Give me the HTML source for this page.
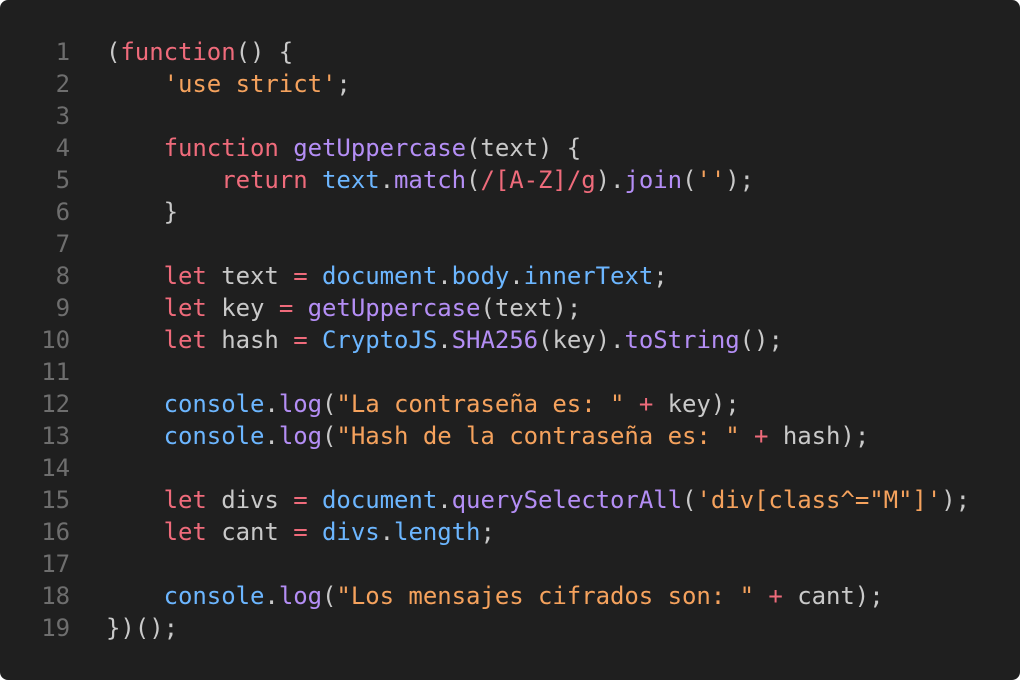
<!DOCTYPE html>
<html><head><style>
html,body{margin:0;padding:0;background:#fff;}
.w{width:1020px;height:680px;background:#1f1f1f;border-radius:8px;position:relative;overflow:hidden;}
pre{margin:0;position:absolute;top:36px;font-family:"DejaVu Sans Mono","Liberation Mono",monospace;font-size:24px;line-height:32px;color:#c9c9c9;letter-spacing:-0.05px;}
.n{left:0;width:70px;text-align:right;color:#6e6e6e;}
.c{left:106px;}
.k{color:#ef6b7b}.s{color:#f5a25d}.f{color:#b48ef5}.p{color:#6cb6ff}
</style></head><body><div class="w">
<pre class="n">1
2
3
4
5
6
7
8
9
10
11
12
13
14
15
16
17
18
19</pre>
<pre class="c">(<span class="k">function</span>() {
    <span class="s">'use strict'</span>;

    <span class="k">function</span> <span class="f">getUppercase</span>(text) {
        <span class="k">return</span> <span class="p">text</span>.<span class="f">match</span>(<span class="k">/[A-Z]/g</span>).<span class="f">join</span>(<span class="s">''</span>);
    }

    <span class="k">let</span> text <span class="k">=</span> <span class="p">document</span>.<span class="p">body</span>.<span class="p">innerText</span>;
    <span class="k">let</span> key <span class="k">=</span> <span class="f">getUppercase</span>(text);
    <span class="k">let</span> hash <span class="k">=</span> <span class="p">CryptoJS</span>.<span class="f">SHA256</span>(key).<span class="f">toString</span>();

    <span class="p">console</span>.<span class="f">log</span>(<span class="s">"La contraseña es: "</span> <span class="k">+</span> key);
    <span class="p">console</span>.<span class="f">log</span>(<span class="s">"Hash de la contraseña es: "</span> <span class="k">+</span> hash);

    <span class="k">let</span> divs <span class="k">=</span> <span class="p">document</span>.<span class="f">querySelectorAll</span>(<span class="s">'div[class^="M"]'</span>);
    <span class="k">let</span> cant <span class="k">=</span> <span class="p">divs</span>.<span class="p">length</span>;

    <span class="p">console</span>.<span class="f">log</span>(<span class="s">"Los mensajes cifrados son: "</span> <span class="k">+</span> cant);
})();</pre>
</div></body></html>
